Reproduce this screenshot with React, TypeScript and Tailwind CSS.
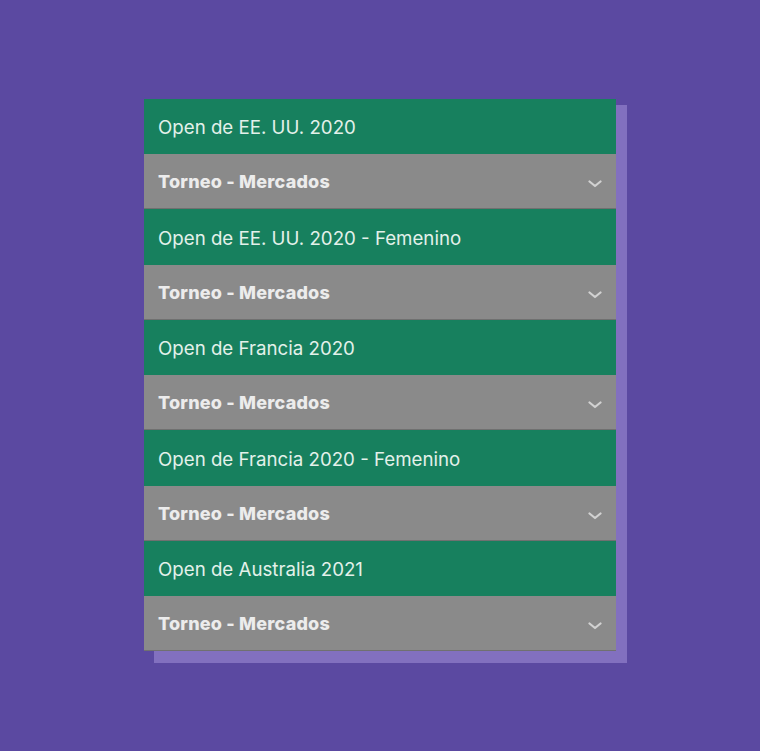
import React from "react";

const tournaments = [
  "Open de EE. UU. 2020",
  "Open de EE. UU. 2020 - Femenino",
  "Open de Francia 2020",
  "Open de Francia 2020 - Femenino",
  "Open de Australia 2021",
];

function Chevron() {
  return (
    <svg width="14" height="8" viewBox="0 0 14 8" fill="none" className="text-[#d2d2d2] mt-[4px]">
      <path d="M1.5 1.5 L7 6 L12.5 1.5" stroke="currentColor" strokeWidth="2.2" strokeLinecap="round" strokeLinejoin="round" />
    </svg>
  );
}

export default function App() {
  return (
    <div
      className="min-h-[751px] w-full bg-[#5b49a1] flex justify-center items-start pt-[99px]"
      style={{ fontFamily: "Inter, 'Noto Sans', sans-serif" }}
    >
      <div className="relative w-[472px]">
        <div className="absolute left-[10px] top-[6px] right-[-11px] bottom-[-12px] bg-[#8270bf]" />
        <div className="relative flex flex-col">
          {tournaments.map((name, i) => (
            <div key={name} className="flex flex-col">
              <div
                className={`${i % 2 === 0 ? "h-[55px]" : "h-[56px]"} bg-[#17805e] flex items-center px-[14px] text-[18.7px] text-[#e3f1ea] pt-[4px]`}
              >
                {name}
              </div>
              <div className="h-[55px] bg-[#8a8a8a] border-b border-[#707070] flex items-center justify-between pl-[14px] pr-[14px] pt-[1px]">
                <span className="text-[18px] font-extrabold text-[#ececec] tracking-[0.2px]">Torneo - Mercados</span>
                <Chevron />
              </div>
            </div>
          ))}
        </div>
      </div>
    </div>
  );
}
